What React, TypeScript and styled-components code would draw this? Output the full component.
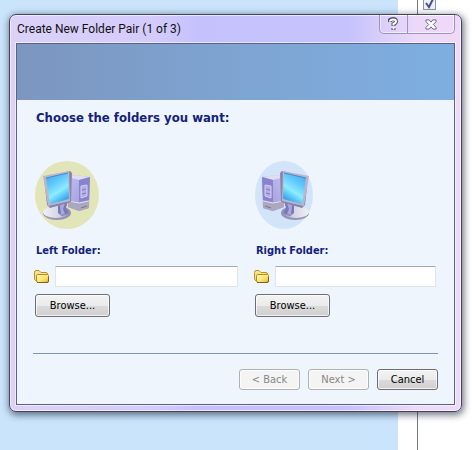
import React, { useState } from "react";
import styled, { createGlobalStyle } from "styled-components";

const uiFont = '"DejaVu Sans Condensed", "DejaVu Sans", Tahoma, sans-serif';

const GlobalStyle = createGlobalStyle`
  * { box-sizing: border-box; }
  body { margin: 0; background: #fff; }
`;

const Desktop = styled.div`
  position: relative;
  min-height: 100vh;
  padding: 14px 10px 38px 9px;
  overflow: hidden;
`;

const Backdrop = styled.div`
  position: absolute;
  inset: 0;
  display: grid;
  grid-template-columns: 1fr 19px 55px;
`;

const BluePane = styled.div`
  background: #c9e4fb;
`;

const Gutter = styled.div`
  background: #fff;
`;

const OptionPane = styled.div`
  padding-left: 5px;
  border-left: 1px solid #777b82;
  background: #fff;
`;

const OptionBox = styled.input`
  display: block;
  appearance: none;
  width: 13px;
  height: 13px;
  margin: -3px 0 0;
  border: 1px solid #92959b;
  background: #eef0f4
    url("data:image/svg+xml,%3Csvg xmlns='http://www.w3.org/2000/svg' viewBox='0 0 11 11'%3E%3Cpath d='M2 5l3 4 4-8' fill='none' stroke='%23405490' stroke-width='2'/%3E%3C/svg%3E")
    center / 11px 11px no-repeat;
`;

const Dialog = styled.section`
  position: relative;
  display: flex;
  flex-direction: column;
  min-height: calc(100vh - 52px);
  padding: 0 6px 6px;
  border: 1px solid #45435f;
  border-radius: 7px;
  background: linear-gradient(90deg, #dcd2f8 0, #d3cbfb 32%, #c5c1fd 42%, #c6c2fd 75%, #ecd9fa 90%, #efd9f8 100%);
  box-shadow: inset 0 0 0 1px rgba(255, 255, 255, 0.6), 1px 2px 7px 1px rgba(20, 30, 50, 0.6);
`;

const TitleBar = styled.header`
  display: flex;
  justify-content: space-between;
  height: 28px;
  padding: 0 0 0 1px;
`;

const Title = styled.h1`
  margin: 0;
  font: 400 12px/28px Roboto, "Segoe UI", sans-serif;
  color: #111;
  white-space: nowrap;
`;

const CaptionButtons = styled.div`
  display: flex;
  height: 19px;
  border: 1px solid #a094b4;
  border-top: 0;
  border-radius: 0 0 5px 5px;
  box-shadow: inset 0 0 0 1px rgba(255, 255, 255, 0.5);
`;

const CaptionButton = styled.button<{ $wide?: boolean }>`
  display: flex;
  align-items: center;
  justify-content: center;
  width: ${(p) => (p.$wide ? 47 : 27)}px;
  padding: 0;
  border: 0;
  background: transparent;

  & + & {
    border-left: 1px solid #a094b4;
  }
`;

const Client = styled.div`
  display: flex;
  flex: 1;
  flex-direction: column;
  border: 1px solid #5d6283;
  outline: 1px solid rgba(255, 255, 255, 0.55);
  background: #eef5fc;
`;

const Banner = styled.div`
  height: 56px;
  background: linear-gradient(90deg, #7c96bf, #7ea4d2 50%, #7eaee1);
`;

const Content = styled.form`
  display: flex;
  flex: 1;
  flex-direction: column;
  padding: 9px 16px 14px;
  font-family: ${uiFont};
`;

const Heading = styled.h2`
  margin: 0 0 0 3px;
  font-size: 13px;
  line-height: 17px;
  font-weight: 700;
  color: #14217a;
`;

const FolderColumns = styled.div`
  display: grid;
  grid-template-columns: 205fr 183fr;
  gap: 15px;
  margin-top: 34px;
  padding-right: 2px;
`;

const FolderColumn = styled.div`
  display: flex;
  flex-direction: column;
  align-items: flex-start;
  min-width: 0;
`;

const FolderLabel = styled.label`
  margin: 13px 0 0 3px;
  font-size: 11px;
  line-height: 16px;
  font-weight: 700;
  color: #14217a;
`;

const PathRow = styled.div`
  display: flex;
  align-items: center;
  gap: 5px;
  width: 100%;
  margin-top: 7px;
`;

const PathInput = styled.input`
  flex: 1;
  min-width: 0;
  height: 21px;
  padding: 2px 4px;
  border: 1px solid #dce4ef;
  border-top-color: #a3a9b3;
  border-radius: 1px;
  background: #fff;
  font: 11px ${uiFont};
`;

const PushButton = styled.button<{ $browse?: boolean }>`
  width: ${(p) => (p.$browse ? 75 : 61)}px;
  height: ${(p) => (p.$browse ? 23 : 21)}px;
  margin: ${(p) => (p.$browse ? "7px 0 0 2px" : "0")};
  padding: 0;
  border: 1px solid #6c6e72;
  border-radius: 3px;
  background: linear-gradient(#f3f3f3 0, #ebebeb 50%, #dbdbdb 51%, #cfcfcf 100%);
  box-shadow: inset 0 0 0 1px rgba(255, 255, 255, 0.7);
  color: #000;
  font: 11px/17px ${uiFont};

  &:disabled {
    border-color: #adb2b5;
    background: #f4f4f4;
    color: #858789;
  }
`;

const Separator = styled.hr`
  width: 100%;
  height: 1px;
  margin: auto 0 15px;
  border: 0;
  background: #7e93bb;
`;

const Actions = styled.footer`
  display: flex;
  justify-content: flex-end;
  gap: 8px;
`;

const ComputerSvg = styled.svg`
  display: block;
  width: 68px;
  height: 70px;
`;

const FolderSvg = styled.svg`
  flex: none;
  width: 17px;
  height: 15px;
`;

function ComputerIcon({ side }: { side: "left" | "right" }) {
  const left = side === "left";
  const id = (name: string) => `${side}-${name}`;
  return (
    <ComputerSvg viewBox="0 0 68 70" aria-hidden="true">
      <defs>
        <linearGradient id={id("screen")} x1="0" y1="0" x2="0.5" y2="1">
          <stop offset="0" stopColor="#3aa5f0" />
          <stop offset="0.4" stopColor="#62c7fb" />
          <stop offset="0.7" stopColor="#8cecff" />
          <stop offset="1" stopColor="#3aa9f0" />
        </linearGradient>
        <linearGradient id={id("side")} x1="0" y1="0" x2="1" y2="1">
          <stop offset="0" stopColor="#c4bfee" />
          <stop offset="1" stopColor="#9792d6" />
        </linearGradient>
        <linearGradient id={id("base")}>
          <stop offset="0" stopColor="#f0f0f6" />
          <stop offset="0.6" stopColor="#d5d4e4" />
          <stop offset="1" stopColor="#9290b4" />
        </linearGradient>
      </defs>
      <ellipse cx={left ? 34 : 31} cy="35" rx={left ? 32 : 29} ry="34" fill={left ? "#e2e5b8" : "#d1e4fa"} />
      <g transform={left ? undefined : "translate(66 0) scale(-1 1)"}>
        <path d="M35 17L42 15 57 17 56 48 46 51 35 47Z" fill={`url(#${id("side")})`} />
        <path d="M35 17L42 15 57 17 46 20Z" fill="#e0dcf4" />
        <path d="M46 20L57 17 56 40 46 42Z" fill="#8883cf" />
        <path d="M35 41L46 43 56 41V48L46 51 35 47Z" fill="#aaa7be" />
        <path d="M35 41L46 43 56 41" fill="none" stroke="#e1dfea" />
        <path d="M48 26L54 25V36L48 38Z" fill="#b5afe6" stroke="#d1cdf2" strokeWidth="1" />
        <path d="M49 30L53 29M49 34L53 33" stroke="#7e78bd" />
        <path d="M48 48L54 46" stroke="#77748f" />
        <ellipse cx="24" cy="53" rx="14" ry="7" fill="#9694b0" />
        <ellipse cx="23" cy="52" rx="13" ry="6" fill={`url(#${id("base")})`} />
        <path d="M25 44L35 41 33 48 36 53 29 56 25 53Z" fill="#7978ba" />
        <path d="M27 45L32 43 30 49 32 54 28 55Z" fill="#a9a7dc" />
        <path d="M11 17L37 11 39 13 38 42 17 48 14 45Z" fill="#8985ac" />
        <path d="M10 16L36 11 37 41 15 46Z" fill="#bab6cd" />
        <path d="M13 18L35 13 36 39 17 44Z" fill={`url(#${id("screen")})`} />
        <path d="M13 18L35 13" stroke="#4a87c9" strokeWidth="1" />
      </g>
    </ComputerSvg>
  );
}

function FolderIcon() {
  return (
    <FolderSvg viewBox="0 0 17 15" aria-hidden="true">
      <defs>
        <linearGradient id="folder-face" x1="0" y1="0" x2="1" y2="1">
          <stop offset="0" stopColor="#fffbc4" />
          <stop offset="0.55" stopColor="#fbe672" />
          <stop offset="1" stopColor="#e5b22a" />
        </linearGradient>
      </defs>
      <path d="M1.500 10V3.500Q1.500 1.500 3 1.500H6L8 3.500H13Q14.500 3.500 14.500 5V11L3 12Z" fill="#f8e384" stroke="#bd9130" />
      <path d="M3.500 11V6.500Q3.500 5.500 5 5.500H14.500Q15.500 5.500 15.500 6.500V12Q15.500 13.500 14 13.500H5Q3.500 13.500 3.500 11Z" fill="url(#folder-face)" stroke="#bb8b20" />
      <path d="M4 13.500H14Q15.500 13.500 15.500 12V8" fill="none" stroke="#80601f" />
    </FolderSvg>
  );
}

function HelpIcon() {
  return (
    <svg width="13" height="14" viewBox="0 0 13 14" aria-hidden="true">
      <path d="M3 5V3Q4 2 6 2Q9 2 9 4.500Q9 6 6.500 7V9M6.500 11V13" fill="none" stroke="#57556a" strokeWidth="4" />
      <path d="M3 4.500V4Q4 2.500 6 2.500Q9 2.500 9 4.500Q9 6 6.500 7V8.500M6.500 10.500V12.500" fill="none" stroke="#fff" strokeWidth="2" />
    </svg>
  );
}

function CloseIcon() {
  return (
    <svg width="12" height="11" viewBox="0 0 13 12" aria-hidden="true">
      <path d="M1 1H4.500L6.500 3.500 8.500 1H12V3L9 6 12 9V11H8.500L6.500 8.500 4.500 11H1V9L4 6 1 3Z" fill="#fff" stroke="#625e75" />
    </svg>
  );
}

function FolderPicker({ side, label }: { side: "left" | "right"; label: string }) {
  const [path, setPath] = useState("");
  const inputId = `${side}-folder`;
  return (
    <FolderColumn>
      <ComputerIcon side={side} />
      <FolderLabel htmlFor={inputId}>{label}</FolderLabel>
      <PathRow>
        <FolderIcon />
        <PathInput id={inputId} value={path} onChange={(e) => setPath(e.target.value)} />
      </PathRow>
      <PushButton type="button" $browse>Browse...</PushButton>
    </FolderColumn>
  );
}

export default function App() {
  return (
    <>
      <GlobalStyle />
      <Desktop>
        <Backdrop>
          <BluePane />
          <Gutter />
          <OptionPane>
            <OptionBox type="checkbox" defaultChecked aria-label="Option" />
          </OptionPane>
        </Backdrop>
        <Dialog role="dialog" aria-labelledby="dialog-title">
          <TitleBar>
            <Title id="dialog-title">Create New Folder Pair (1 of 3)</Title>
            <CaptionButtons>
              <CaptionButton type="button" aria-label="Help"><HelpIcon /></CaptionButton>
              <CaptionButton type="button" $wide aria-label="Close"><CloseIcon /></CaptionButton>
            </CaptionButtons>
          </TitleBar>
          <Client>
            <Banner />
            <Content onSubmit={(e) => e.preventDefault()}>
              <Heading>Choose the folders you want:</Heading>
              <FolderColumns>
                <FolderPicker side="left" label="Left Folder:" />
                <FolderPicker side="right" label="Right Folder:" />
              </FolderColumns>
              <Separator />
              <Actions>
                <PushButton type="button" disabled>&lt; Back</PushButton>
                <PushButton type="button" disabled>Next &gt;</PushButton>
                <PushButton type="button">Cancel</PushButton>
              </Actions>
            </Content>
          </Client>
        </Dialog>
      </Desktop>
    </>
  );
}
